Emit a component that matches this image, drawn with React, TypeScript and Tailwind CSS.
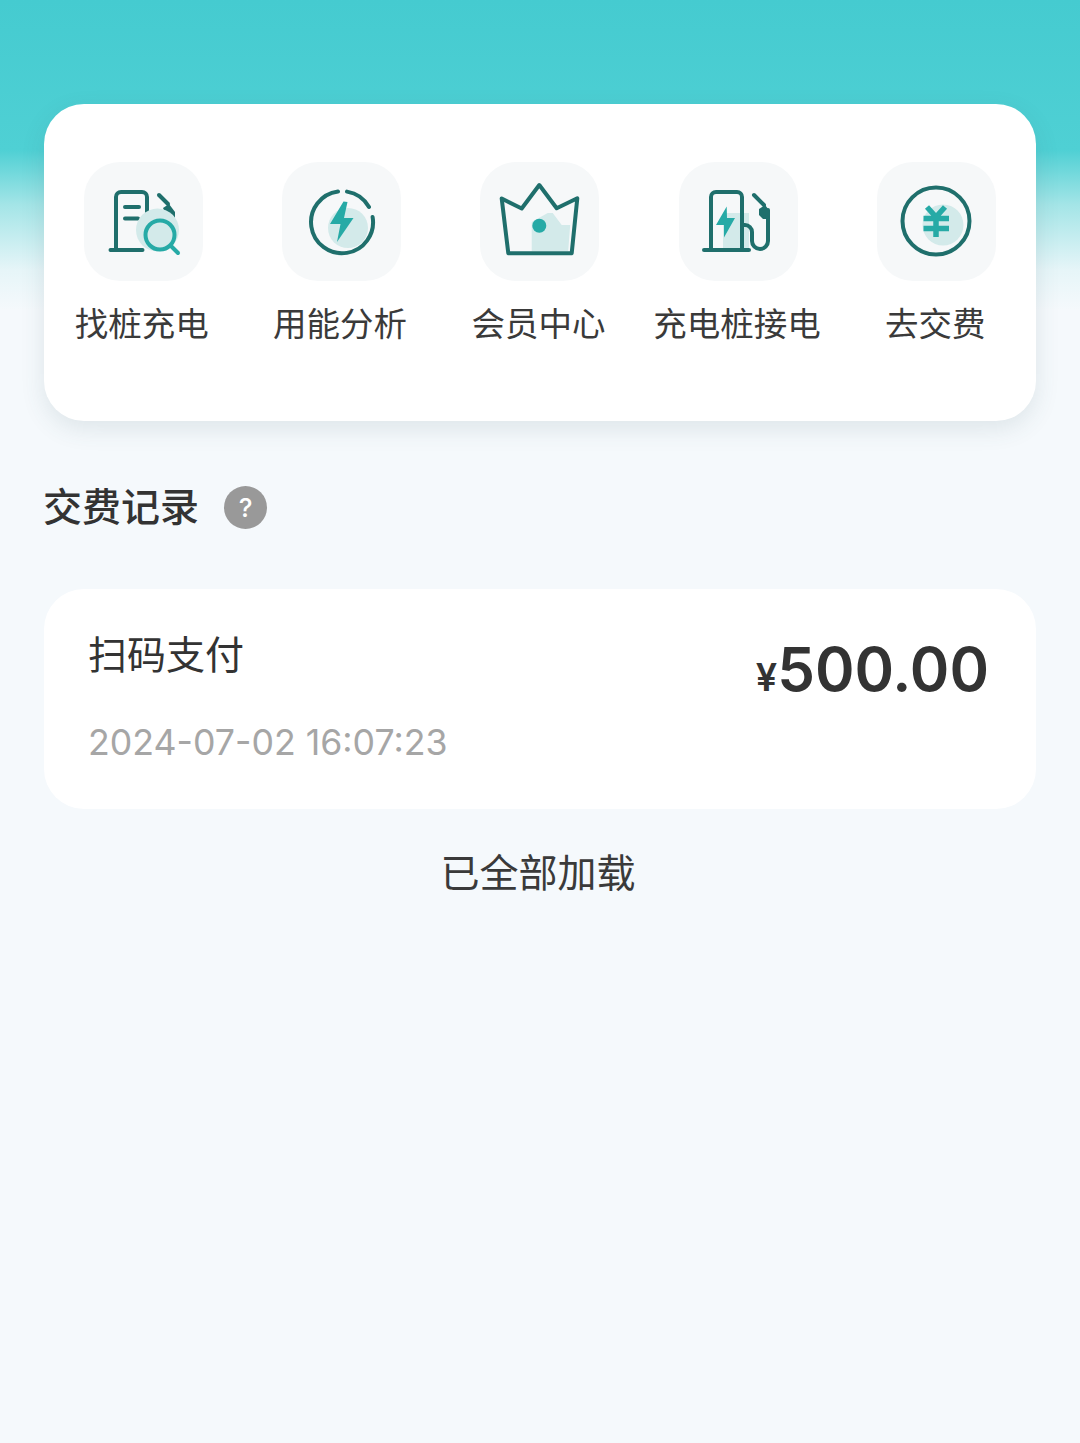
const cjk = "font-['Inter','Noto_Sans_CJK_SC',sans-serif]";

const DARK = "#1f6f6c";
const TEAL = "#26aaa6";
const PALE = "#d3eaea";

const FindIcon = () => (
  <svg viewBox="0 0 119 119" className="w-full h-full" fill="none" strokeLinecap="round" strokeLinejoin="round">
    <path d="M32 88V35a5 5 0 0 1 5-5h21a5 5 0 0 1 5 5v22M26.500 88h32M41 45h14M41 56.500h13" stroke={DARK} strokeWidth="4" />
    <path d="M75 33l9 9" stroke={DARK} strokeWidth="4" />
    <path d="M79 46l6-4 6 8v7l-9-4z" fill={DARK} />
    <circle cx="73.500" cy="68" r="21.500" fill={PALE} />
    <circle cx="76" cy="73" r="14.500" stroke={TEAL} strokeWidth="4" />
    <path d="M87 84l7 7" stroke={TEAL} strokeWidth="4" />
  </svg>
);

const EnergyIcon = () => (
  <svg viewBox="0 0 119 119" className="w-full h-full" fill="none" strokeLinecap="round" strokeLinejoin="round">
    <circle cx="66" cy="66" r="20" fill={PALE} />
    <path d="M56 29.500A31 31 0 1 0 90.600 55M65 29.600A31 31 0 0 1 87 45" stroke={DARK} strokeWidth="4" />
    <path d="M61.500 39.500L48 62h10.500L55 80l16.500-24H62l3.500-16z" fill={TEAL} />
  </svg>
);

const CrownIcon = () => (
  <svg viewBox="0 0 119 119" className="w-full h-full" fill="none" strokeLinecap="round" strokeLinejoin="round">
    <path d="M51.700 89V60l16-9h5l9 12h8.500l-2 26z" fill={PALE} />
    <path d="M21.700 36.500l20 10L59.300 23l17.400 23.300 20.600-10-5.600 55H28.300z" stroke={DARK} strokeWidth="4" />
    <circle cx="59.300" cy="63.700" r="7" fill={TEAL} />
  </svg>
);

const PileIcon = () => (
  <svg viewBox="0 0 119 119" className="w-full h-full" fill="none" strokeLinecap="round" strokeLinejoin="round">
    <rect x="44" y="51" width="26" height="37" fill={PALE} />
    <path d="M32 88V35a5 5 0 0 1 5-5h21a5 5 0 0 1 5 5v53M25 88h45" stroke={DARK} strokeWidth="4" />
    <path d="M63 63h3a7 7 0 0 1 7 7v9a8 8 0 0 0 16 0V48M75 33l10 10" stroke={DARK} strokeWidth="4" />
    <path d="M80 47l6-4 4 5v9h-6l-4-4z" fill={DARK} />
    <path d="M47.700 44.500L37 63h8v12.500L56 56h-8z" fill={TEAL} />
  </svg>
);

const PayIcon = () => (
  <svg viewBox="0 0 119 119" className="w-full h-full" fill="none" strokeLinejoin="round">
    <circle cx="66" cy="63" r="20.500" fill={PALE} />
    <circle cx="59" cy="59" r="33.500" stroke={DARK} strokeWidth="4" />
    <path d="M50 45l9 10 9-10M46.500 56.500h25.500M46.500 66.500h25.500M59 55v20" stroke={TEAL} strokeWidth="5.500" />
  </svg>
);

const entries = [
  { label: "找桩充电", icon: <FindIcon /> },
  { label: "用能分析", icon: <EnergyIcon /> },
  { label: "会员中心", icon: <CrownIcon /> },
  { label: "充电桩接电", icon: <PileIcon /> },
  { label: "去交费", icon: <PayIcon /> },
];

export default function App() {
  return (
    <div className={`${cjk} min-h-[1443px] px-11 pt-[104px] bg-[#f5f9fc] bg-[linear-gradient(180deg,#45cbd0_0,#4fd0d4_150px,#a4e5e7_205px,#e6f5f8_270px,#f5f9fc_310px)] text-[#333]`}>
      {/* shortcuts */}
      <div className="h-[317px] pt-[58px] rounded-[40px] bg-white shadow-[0_8px_24px_rgba(60,90,100,0.12)] grid grid-cols-5 items-start">
        {entries.map((item) => (
          <div key={item.label} className="flex flex-col items-center">
            <div className="w-[119px] h-[119px] rounded-[36px] bg-[#f6f8f9]">{item.icon}</div>
            <div className="mt-5 pr-[3px] text-[33.5px] leading-[46px] text-[#3a3a3a] whitespace-nowrap">{item.label}</div>
          </div>
        ))}
      </div>

      {/* records heading */}
      <div className="mt-[62px] h-12 -ml-px flex items-center gap-[25px]">
        <h2 className="text-[39px] leading-[48px] font-medium text-[#333]">交费记录</h2>
        <div className="w-[43px] h-[43px] rounded-full bg-[#999] text-white flex items-center justify-center text-[26px] font-medium">?</div>
      </div>

      {/* record card */}
      <div className="mt-[58px] h-[220px] rounded-[40px] bg-white pl-[44px] pr-[47px] pt-[40px] flex justify-between">
        <div>
          <div className="text-[39px] leading-[52px] text-[#333]">扫码支付</div>
          <div className="mt-[35px] text-[35.700px] leading-[52px] text-[#a6a6a6]">2024-07-02 16:07:23</div>
        </div>
        <div className="mt-[5px] flex items-baseline font-semibold text-[#333] h-[70px]">
          <span className="text-[38px] leading-[70px]">¥</span>
          <span className="text-[60px] leading-[70px]">500.00</span>
        </div>
      </div>

      <div className="mt-[38px] pr-1 text-center text-[39px] leading-[52px] text-[#3a3a3a]">已全部加载</div>
    </div>
  );
}
